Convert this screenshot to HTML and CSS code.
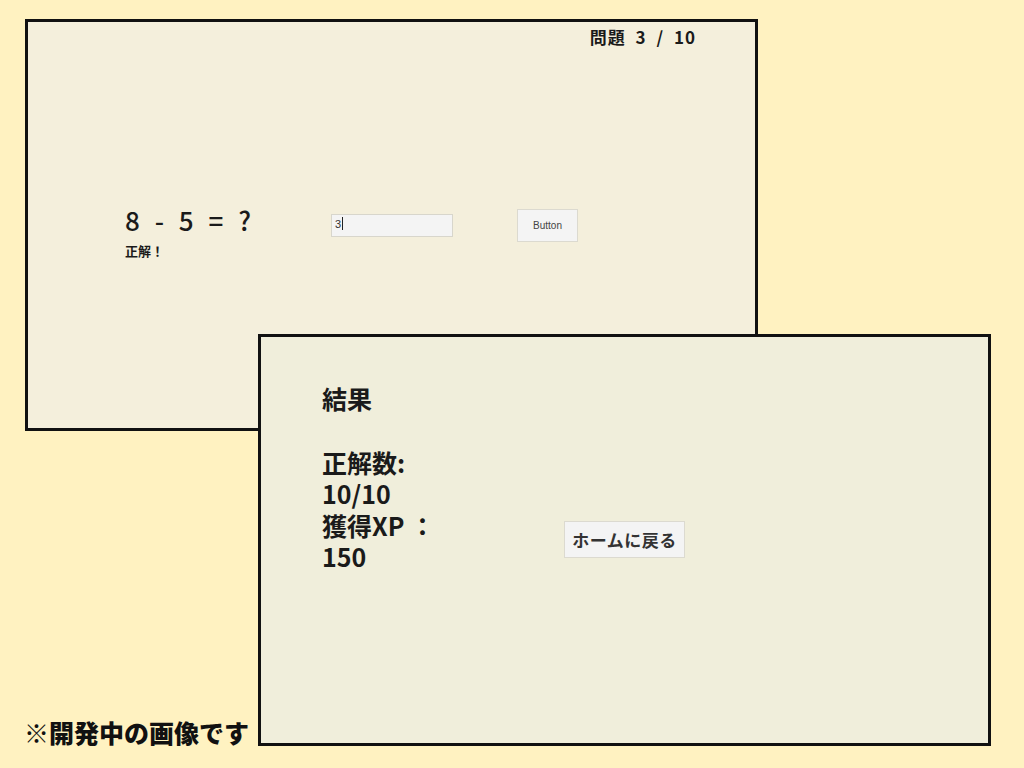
FILE: index.html
```html
<!DOCTYPE html>
<html lang="ja">
<head>
    <meta charset="UTF-8">
    <meta name="viewport" content="width=device-width, initial-scale=1.0">
    <title>計算クイズ</title>
    <link rel="stylesheet" href="styles.css">
</head>
<body>
    <div class="canvas">
        <div class="window quiz-window">
            <div class="quiz-header">
                <span class="quiz-progress">問題 3 / 10</span>
            </div>
            <div class="quiz-row">
                <div class="question">
                    <div class="question-text">8 - 5 = ?</div>
                    <div class="feedback">正解！</div>
                </div>
                <div class="answer-box">3<span class="caret"></span></div>
                <button class="btn-unity">Button</button>
            </div>
        </div>

        <div class="window result-window">
            <div class="result-row">
                <div class="result-text">
                    <div class="result-title">結果</div>
                    <div class="result-lines">
                        <div>正解数:</div>
                        <div>10/10</div>
                        <div>獲得XP ：</div>
                        <div>150</div>
                    </div>
                </div>
                <button class="btn-home">ホームに戻る</button>
            </div>
        </div>

        <div class="dev-note">※開発中の画像です</div>
    </div>
</body>
</html>
```

FILE: styles.css
```css
body {
    margin: 0;
    background-color: #fff2c1;
    font-family: "Noto Sans CJK JP", "Noto Sans", sans-serif;
    color: #1a1a1a;
}

.canvas {
    position: relative;
    width: 1024px;
    height: 768px;
    overflow: hidden;
}

.window {
    position: absolute;
    box-sizing: border-box;
    width: 733px;
    height: 412px;
    border: 3px solid #111;
}

.quiz-window {
    left: 25px;
    top: 19px;
    background-color: #f4efdc;
}

.result-window {
    left: 258px;
    top: 334px;
    background-color: #f0eedb;
}

.quiz-header {
    display: flex;
    justify-content: flex-end;
    padding: 5px 59px 0 0;
}

.quiz-progress {
    font-size: 17px;
    line-height: 20px;
    font-weight: 600;
    letter-spacing: 1px;
    word-spacing: 5px;
}

.quiz-row {
    display: flex;
    align-items: flex-start;
    margin-top: 158px;
    padding-left: 97px;
}

.question {
    width: 206px;
}

.question-text {
    font-size: 26px;
    line-height: 30px;
    font-weight: 500;
    letter-spacing: 1px;
    word-spacing: 7px;
}

.feedback {
    margin-top: 8px;
    font-size: 13px;
    line-height: 16px;
    font-weight: 700;
}

.answer-box {
    box-sizing: border-box;
    width: 122px;
    height: 23px;
    margin-top: 9px;
    padding: 0 3px;
    background-color: #f4f4f4;
    border: 1px solid #d8d6cc;
    font-family: "Liberation Sans", sans-serif;
    font-size: 11px;
    line-height: 19px;
    color: #333;
}

.caret {
    display: inline-block;
    width: 1px;
    height: 13px;
    margin-left: 1px;
    vertical-align: -2px;
    background-color: #222;
}

.btn-unity {
    box-sizing: border-box;
    width: 61px;
    height: 33px;
    margin: 4px 0 0 64px;
    padding: 0;
    background-color: #f4f4f4;
    border: 1px solid #dcdad0;
    font-family: "Liberation Sans", sans-serif;
    font-size: 10px;
    color: #444;
}

.result-row {
    display: flex;
    align-items: flex-start;
    padding: 45px 0 0 61px;
}

.result-text {
    width: 242px;
}

.result-title {
    font-size: 25px;
    line-height: 32px;
    font-weight: 600;
}

.result-lines {
    margin-top: 33px;
    font-size: 25px;
    line-height: 31.3px;
    font-weight: 600;
}

.btn-home {
    box-sizing: border-box;
    width: 121px;
    height: 37px;
    margin-top: 139px;
    padding: 0;
    background-color: #f4f4f4;
    border: 1px solid #dcdad0;
    font-family: "Noto Sans CJK JP", sans-serif;
    font-size: 17px;
    font-weight: 700;
    letter-spacing: 0.5px;
    color: #333;
}

.dev-note {
    position: absolute;
    left: 24px;
    top: 714px;
    font-size: 25px;
    line-height: 36px;
    font-weight: 900;
    color: #111;
}
```
